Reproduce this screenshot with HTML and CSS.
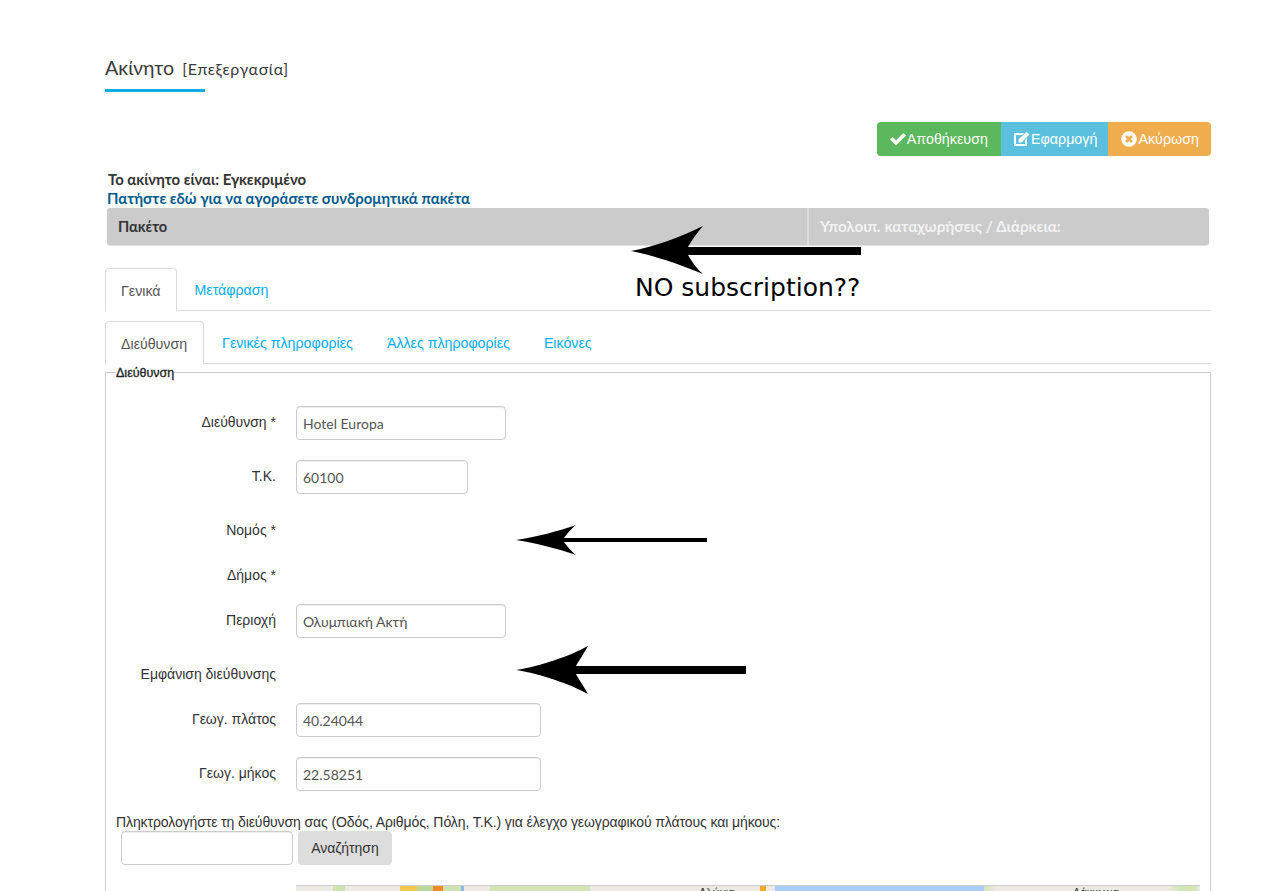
FILE: index.html
```html
<!DOCTYPE html>
<html lang="el">
<head>
    <meta charset="UTF-8">
    <title>Ακίνητο [Επεξεργασία]</title>
    <link rel="stylesheet" href="styles.css">
</head>
<body>
    <div class="page">
        <div class="page-title">
            <h1>Ακίνητο <small>[Επεξεργασία]</small></h1>
        </div>

        <div class="toolbar">
            <a class="tool-btn btn-save">
                <svg class="tool-icon" viewBox="0 0 16 16"><path d="M0 8.6 2.6 6 6 9.4 13.4 2 16 4.6 6 14.6z" fill="#fff"/></svg>Αποθήκευση
            </a>
            <a class="tool-btn btn-apply">
                <svg class="tool-icon" viewBox="0 0 16 16"><path d="M0 2h10L8 4H2v9h9V9l2-2v8H0z" fill="#fff"/><path d="M4.5 8.5 12.5.8 15.4 3.6 7.6 11.4H4.5z" fill="#fff"/></svg>Εφαρμογή
            </a>
            <a class="tool-btn btn-cancel">
                <svg class="tool-icon" viewBox="0 0 16 16"><circle cx="8" cy="8" r="7.8" fill="#fff"/><path d="M5 5 11 11M11 5 5 11" stroke="#f0ad4e" stroke-width="2.6"/></svg>Ακύρωση
            </a>
        </div>

        <div class="status-info">
            <div class="status-line">Το ακίνητο είναι: Εγκεκριμένο</div>
            <a class="buy-link">Πατήστε εδώ για να αγοράσετε συνδρομητικά πακέτα</a>
        </div>

        <div class="package-table">
            <div class="package-name">Πακέτο</div>
            <div class="package-left">Υπολοιπ. καταχωρήσεις / Διάρκεια:</div>
        </div>

        <ul class="tabs tabs-main">
            <li class="active">Γενικά</li>
            <li>Μετάφραση</li>
        </ul>

        <ul class="tabs tabs-sub">
            <li class="active">Διεύθυνση</li>
            <li>Γενικές πληροφορίες</li>
            <li>Άλλες πληροφορίες</li>
            <li>Εικόνες</li>
        </ul>

        <fieldset class="address-box">
            <legend>Διεύθυνση</legend>

            <div class="form-row">
                <label>Διεύθυνση *</label>
                <input class="field field-wide" type="text" value="Hotel Europa">
            </div>
            <div class="form-row">
                <label>Τ.Κ.</label>
                <input class="field field-short" type="text" value="60100">
            </div>
            <div class="form-row form-row-empty">
                <label>Νομός *</label>
            </div>
            <div class="form-row form-row-empty row-municipality">
                <label>Δήμος *</label>
            </div>
            <div class="form-row">
                <label>Περιοχή</label>
                <input class="field field-wide" type="text" value="Ολυμπιακή Ακτή">
            </div>
            <div class="form-row form-row-empty row-show">
                <label>Εμφάνιση διεύθυνσης</label>
            </div>
            <div class="form-row">
                <label>Γεωγ. πλάτος</label>
                <input class="field field-long" type="text" value="40.24044">
            </div>
            <div class="form-row">
                <label>Γεωγ. μήκος</label>
                <input class="field field-long" type="text" value="22.58251">
            </div>

            <div class="geo-search">
                <p>Πληκτρολογήστε τη διεύθυνση σας (Οδός, Αριθμός, Πόλη, Τ.Κ.) για έλεγχο γεωγραφικού πλάτους και μήκους:</p>
                <div class="geo-controls">
                    <input class="field field-search" type="text">
                    <button class="search-btn">Αναζήτηση</button>
                </div>
            </div>

            <div class="map">
                <div class="map-west">Αλώνια</div>
                <div class="map-sea"></div>
                <div class="map-east">Λάκκωμα</div>
            </div>
        </fieldset>
    </div>

    <!-- notes drawn on top of the screenshot -->
    <svg class="note note-sub" viewBox="0 0 230 50"><path d="M0 26C22 22 50 12 72 1 64 10 60 17 57 22H230V30H57C60 35 64 42 72 49 50 40 22 30 0 26Z"/></svg>
    <span class="note-text">NO subscription??</span>
    <svg class="note note-county" viewBox="0 0 191 32"><path d="M0 16C20 13 43 7 60 1 54 6 50 11 48 14H191V18H48C50 21 54 26 60 31 43 25 20 19 0 16Z"/></svg>
    <svg class="note note-show" viewBox="0 0 230 50"><path d="M0 25C25 21 54 11 72 1 67 10 62 17 60 21H230V29H60C62 33 67 40 72 49 54 39 25 29 0 25Z"/></svg>
</body>
</html>
```

FILE: styles.css
```css
html, body {
    height: 891px;
    overflow: hidden;
}
body {
    margin: 0;
    position: relative;
    font-family: Lato, "Open Sans", Arial, sans-serif;
    font-size: 14px;
    color: #333;
    background-color: #ffffff;
}
.page {
    width: 1106px;
    margin-left: 105px;
    padding-top: 55px;
}

/* title */
.page-title {
    height: 37px;
}
.page-title h1 {
    display: inline-block;
    width: 100px;
    height: 34px;
    margin: 0;
    font-size: 19.6px;
    font-weight: 400;
    line-height: 26px;
    white-space: nowrap;
    color: #3a3a3a;
    border-bottom: 3px solid #10ace4;
}
.page-title small {
    font-size: 16px;
    margin-left: 3px;
    letter-spacing: 0.6px;
}

/* top buttons */
.toolbar {
    display: flex;
    justify-content: flex-end;
    margin-top: 30px;
}
.tool-btn {
    display: flex;
    align-items: center;
    height: 34px;
    padding: 0 12px 0 13px;
    font-family: "Liberation Sans", Arial, sans-serif;
    font-size: 14.3px;
    color: #fff;
}
.tool-icon {
    width: 16px;
    height: 16px;
    margin-right: 1px;
}
.btn-save {
    padding-right: 13px;
    background-color: #5cb85c;
    border-radius: 4px 0 0 4px;
}
.btn-apply {
    padding-right: 11px;
    background-color: #5bc0de;
}
.btn-cancel {
    background-color: #f0ad4e;
    border-radius: 0 4px 4px 0;
}

/* status */
.status-info {
    margin: 14px 0 0 3px;
    font-weight: 700;
    font-size: 14.9px;
    line-height: 19px;
}
.status-line {
    color: #333;
}
.buy-link {
    display: block;
    margin-left: -1px;
    color: #005a8c;
}
.package-table {
    display: flex;
    width: 1102px;
    height: 37px;
    margin-left: 2px;
    line-height: 37px;
    font-size: 14.6px;
    font-weight: 700;
    background-color: #cbcbcb;
    border-radius: 3px;
    box-shadow: 0 1px 1px #dedede;
}
.package-name {
    width: 702px;
    padding-left: 11px;
    box-sizing: border-box;
    border-right: 2px solid #dddddd;
}
.package-left {
    padding-left: 11px;
    font-size: 15.2px;
    color: #f2f2f2;
}

/* tabs */
.tabs {
    display: flex;
    list-style: none;
    margin: 0;
    padding: 0;
    height: 42px;
    border-bottom: 1px solid #dddddd;
    color: #00aeef;
    font-family: "Liberation Sans", Arial, sans-serif;
    font-size: 14.2px;
}
.tabs-main {
    margin-top: 23px;
}
.tabs-sub {
    margin-top: 10px;
}
.tabs li {
    padding: 0 16px 0 18px;
    line-height: 45px;
}
.tabs li.active {
    height: 42px;
    padding: 0 15px;
    color: #555;
    background-color: #fff;
    border: 1px solid #dddddd;
    border-bottom-color: #fff;
    border-radius: 4px 4px 0 0;
}
.tabs-sub li.active {
    padding-right: 16px;
}

/* address form */
.address-box {
    margin: 1px 0 0;
    padding: 0;
    box-sizing: border-box;
    height: 526px;
    border: 1px solid #cccccc;
    border-bottom: none;
}
.address-box legend {
    margin-left: 10px;
    padding: 2px 0 0;
    font-family: "Liberation Sans", Arial, sans-serif;
    font-size: 12.5px;
    font-weight: 400;
    line-height: 12px;
    color: #222;
    -webkit-text-stroke: 0.3px #222;
}
.form-row {
    display: flex;
    align-items: flex-start;
    height: 34px;
    margin-bottom: 20px;
}
.form-row:first-of-type {
    margin-top: 27px;
}
.form-row label {
    width: 170px;
    flex: none;
    margin-right: 20px;
    text-align: right;
    font-family: "Liberation Sans", Arial, sans-serif;
    line-height: 32px;
}
.form-row-empty {
    height: 26px;
    margin-bottom: 19px;
}
.row-municipality {
    margin-bottom: 19px;
}
.row-show {
    height: 30px;
    margin-top: 5px;
    margin-bottom: 15px;
}
.field {
    box-sizing: border-box;
    height: 34px;
    padding: 0 6px;
    font-family: Lato, "Open Sans", Arial, sans-serif;
    font-size: 14px;
    color: #555;
    background: #fff;
    border: 1px solid #cccccc;
    border-radius: 4px;
    box-shadow: inset 0 1px 1px rgba(0, 0, 0, .07);
}
.field-wide {
    width: 210px;
}
.field-short {
    width: 172px;
}
.field-long {
    width: 245px;
}
.field-search {
    width: 172px;
}
.geo-search {
    padding-top: 1px;
}
.geo-search p {
    margin: 0 0 0 10px;
    font-family: "Liberation Sans", Arial, sans-serif;
    font-size: 14px;
    line-height: 20px;
    letter-spacing: -0.1px;
    white-space: nowrap;
}
.geo-controls {
    display: flex;
    gap: 5px;
    margin: -1px 0 0 15px;
}
.search-btn {
    height: 34px;
    width: 94px;
    padding: 0;
    font-family: "Liberation Sans", Arial, sans-serif;
    font-size: 14px;
    color: #333;
    background-color: #dddddd;
    border: none;
    border-radius: 4px;
}

/* map, only its top edge is on screen */
.map {
    display: flex;
    width: 904px;
    height: 5px;
    margin: 20px 0 0 190px;
    overflow: hidden;
    font-family: "Liberation Sans", Arial, sans-serif;
    font-size: 11px;
    line-height: 13px;
    border-top: 1px solid #cfcfcf;
}
.map-west {
    width: 479px;
    padding-left: 403px;
    box-sizing: border-box;
    background: linear-gradient(90deg,
        #eceae2 37px, #cfe2b4 37px, #cfe2b4 49px, #eceae2 49px,
        #eceae2 104px, #f2c94c 104px, #f2c94c 121px,
        #bcd69c 121px, #bcd69c 137px, #f08a24 137px, #f08a24 147px,
        #cfe2b4 147px, #cfe2b4 165px, #8fb4f0 165px, #8fb4f0 168px,
        #eceae2 168px, #eceae2 194px, #d3e4b6 194px, #d3e4b6 294px,
        #eceae2 294px, #eceae2 464px, #f5a623 464px, #f5a623 470px,
        #eceae2 470px);
}
.map-sea {
    width: 209px;
    background-color: #a8cdf7;
}
.map-east {
    width: 216px;
    padding-left: 89px;
    box-sizing: border-box;
    background: linear-gradient(90deg, #d3e4b6 0, #eceae2 12px, #eceae2 185px, #d3e4b6 195px, #d3e4b6 210px, #eceae2 216px);
}

/* black arrows and note */
.note {
    position: absolute;
    fill: #000;
}
.note-sub {
    left: 631px;
    top: 225px;
    width: 230px;
    height: 50px;
}
.note-county {
    left: 516px;
    top: 524px;
    width: 191px;
    height: 32px;
}
.note-show {
    left: 516px;
    top: 645px;
    width: 230px;
    height: 50px;
}
.note-text {
    position: absolute;
    left: 635px;
    top: 273px;
    font-family: "DejaVu Sans", Verdana, sans-serif;
    font-size: 25px;
    line-height: 30px;
    color: #000;
}
```
